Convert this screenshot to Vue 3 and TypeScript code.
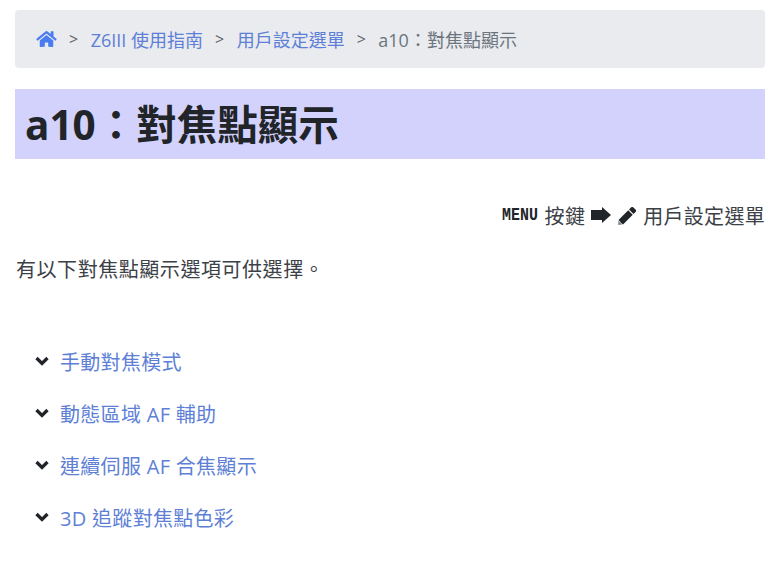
<script setup lang="ts">
const items: string[] = ['手動對焦模式', '動態區域 AF 輔助', '連續伺服 AF 合焦顯示', '3D 追蹤對焦點色彩']
</script>

<template>
  <div class="page" lang="zh-TW">
    <nav class="crumbs">
      <a class="link home" href="#" aria-label="home">
        <svg width="21" height="18" viewBox="0 0 576 512"><path fill="currentColor" d="M280.4 148.3 96 300.1V464a16 16 0 0 0 16 16l112.100-.3a16 16 0 0 0 15.900-16V368a16 16 0 0 1 16-16h64a16 16 0 0 1 16 16v95.600a16 16 0 0 0 16 16.100L464 480a16 16 0 0 0 16-16V300L295.700 148.300a12.200 12.200 0 0 0-15.300 0zM571.600 251.500 488 182.600V44.100a12 12 0 0 0-12-12h-56a12 12 0 0 0-12 12v72.600L318.500 43a48 48 0 0 0-61 0L4.300 251.500a12 12 0 0 0-1.600 16.900l25.500 31A12 12 0 0 0 45.200 301l235.200-193.700a12.200 12.200 0 0 1 15.300 0L530.900 301a12 12 0 0 0 16.900-1.600l25.500-31a12 12 0 0 0-1.700-16.900z"/></svg>
      </a>
      <span class="sep">&gt;</span>
      <a class="link" href="#">Z6III 使用指南</a>
      <span class="sep">&gt;</span>
      <a class="link" href="#">用戶設定選單</a>
      <span class="sep">&gt;</span>
      <span class="current">a10：對焦點顯示</span>
    </nav>
    <h1 class="title"><span class="title-text">a10：對焦點顯示</span></h1>
    <p class="menu-path">
      <span class="mono">MENU</span> 按鍵
      <svg class="arrow" width="20" height="16" viewBox="0 0 20 16"><path fill="currentColor" d="M0 3h11V0l9 8-9 8v-3H0z"/></svg>
      <svg class="pencil" width="20" height="18" viewBox="0 0 512 512">
        <path fill="currentColor" d="m290.700 93.200 128 128L142.700 497.200 80 445 60 410 14.700 369.100zM497.900 74.100 437.800 14a48 48 0 0 0-67.900 0l-56.500 56.500 128 128 56.500-56.500a48 48 0 0 0 0-67.900z"/>
        <path fill="#8a8d91" d="M14.700 385 120 495 28.500 509.800A24 24 0 0 1 2 483.300z"/>
      </svg>
      用戶設定選單
    </p>
    <p class="intro">有以下對焦點顯示選項可供選擇。</p>
    <ul class="list">
      <li v-for="item in items" :key="item" class="row">
        <svg class="chev" width="14" height="10" viewBox="0 0 14 10"><path d="M1.500 2 7 7.500 12.500 2" fill="none" stroke="currentColor" stroke-width="3.300"/></svg>
        <a class="link" href="#">{{ item }}</a>
      </li>
    </ul>
  </div>
</template>

<style>
html, body { margin: 0; background: #fff; }
</style>

<style scoped>
.page {
  padding: 10px 15px 0;
  font-family: "Open Sans", "Noto Sans CJK TC", sans-serif;
  font-size: 20px;
  letter-spacing: 0.3px;
  color: #3c4147;
}
.crumbs {
  display: flex;
  align-items: center;
  height: 58px;
  padding: 0 20px 0 21px;
  box-sizing: border-box;
  background: #e9ebef;
  border-radius: 4px;
  font-size: 18px;
  letter-spacing: 0;
  color: #6c757d;
}
.link { color: #5e7fd6; text-decoration: none; }
.home { color: #4a7cf0; display: flex; }
.sep { margin: 0 12.500px 0 12px; color: #5c636a; font-size: 16px; }
.current { color: #6c757d; }
.title {
  margin: 21px 0 0;
  height: 70px;
  line-height: 70px;
  padding-left: 10px;
  background: #d2d2fc;
  font-size: 40.500px;
  font-weight: 700;
  letter-spacing: 0;
  color: #212529;
}
.title-text { display: block; padding-top: 1px; }
.menu-path {
  margin: 43px 0 0;
  display: flex;
  justify-content: flex-end;
  align-items: center;
  gap: 6px;
  height: 26px;
}
.mono {
  display: inline-block;
  font-family: "Liberation Mono", monospace;
  font-weight: 700;
  font-size: 18px;
  letter-spacing: 0;
  color: #212529;
  transform: scaleX(0.83);
  transform-origin: left center;
  margin-right: -7px;
}
.arrow, .pencil { color: #212529; }
.pencil { margin-top: 2px; }
.intro { margin: 29px 0 0; line-height: 26px; letter-spacing: 0.55px; padding-left: 1px; }
.list { list-style: none; margin: 52px 0 0; padding: 0 0 0 20px; }
.row { display: flex; align-items: center; gap: 11px; height: 52px; }
.chev { color: #212529; }
</style>
